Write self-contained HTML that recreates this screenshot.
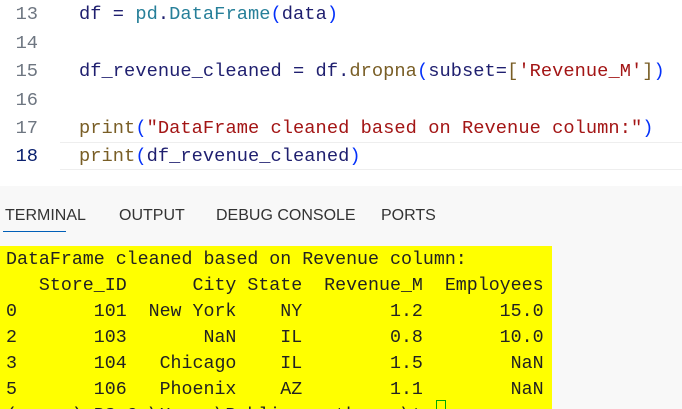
<!DOCTYPE html>
<html><head><style>
html,body{margin:0;width:682px;height:409px;overflow:hidden}
body{background:#fff;font-family:"Liberation Mono",monospace;position:relative}
.ln{position:absolute;left:0;width:38px;text-align:right;font-size:18.7px;color:#6e7681;}
.cd{position:absolute;left:79px;font-size:18.7px;color:#1f1f6f;white-space:pre;letter-spacing:0.05px}
.k{color:#795e26}.t{color:#267f99}.s{color:#a31515}.b{color:#0431fa}
.term{position:absolute;left:0;top:186px;width:682px;height:223px;background:#f8f8f8}
.tab{position:absolute;top:207px;font-family:"Liberation Sans",sans-serif;font-size:16px;color:#333;white-space:nowrap}
.y{position:absolute;left:0;top:246px;width:552px;height:163px;background:#ffff00}
.o{position:absolute;left:6px;top:247px;font-size:18.3px;line-height:26px;white-space:pre;color:#222}
</style></head><body>
<div class="ln" style="top:3px">13</div>
<div class="ln" style="top:32px">14</div>
<div class="ln" style="top:60px">15</div>
<div class="ln" style="top:89px">16</div>
<div class="ln" style="top:117px">17</div>
<div class="ln" style="top:145px;color:#0b216f">18</div>
<div style="position:absolute;left:60px;top:142px;width:630px;height:26px;border-top:1px solid #eee;border-bottom:1px solid #eee"></div>
<div class="cd" style="top:3px">df = <span class="t">pd</span>.<span class="t">DataFrame</span><span class="b">(</span>data<span class="b">)</span></div>
<div class="cd" style="top:60px">df_revenue_cleaned = df.<span class="k">dropna</span><span class="b">(</span>subset=<span class="k">[</span><span class="s">'Revenue_M'</span><span class="k">]</span><span class="b">)</span></div>
<div class="cd" style="top:117px"><span class="k">print</span><span class="b">(</span><span class="s">"DataFrame cleaned based on Revenue column:"</span><span class="b">)</span></div>
<div class="cd" style="top:145px"><span class="k">print</span><span class="b">(</span>df_revenue_cleaned<span class="b">)</span></div>
<div class="term"></div>
<div class="tab" style="left:5px">TERMINAL</div>
<div style="position:absolute;left:3px;top:231px;width:63px;height:1px;background:#005fb8"></div>
<div class="tab" style="left:119px">OUTPUT</div>
<div class="tab" style="left:216px">DEBUG CONSOLE</div>
<div class="tab" style="left:381px">PORTS</div>
<div class="y"></div>
<div class="o">DataFrame cleaned based on Revenue column:
   Store_ID      City State  Revenue_M  Employees
0       101  New York    NY        1.2       15.0
2       103       NaN    IL        0.8       10.0
3       104   Chicago    IL        1.5        NaN
5       106   Phoenix    AZ        1.1        NaN
(.venv) PS C:\Users\Public> python .\t.py </div>
<div style="position:absolute;left:436px;top:400px;width:8px;height:12px;border:1px solid #0a0"></div>
</body></html>
